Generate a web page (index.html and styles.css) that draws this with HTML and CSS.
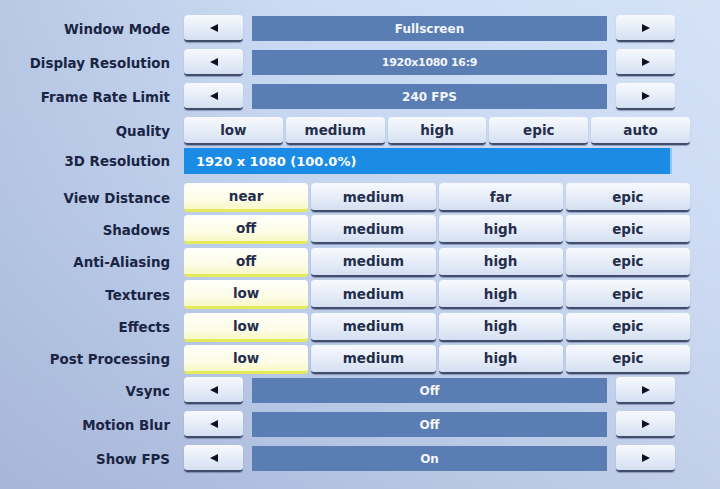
FILE: index.html
```html
<!DOCTYPE html>
<html>
<head>
<meta charset="utf-8">
<link rel="stylesheet" href="styles.css">
</head>
<body>
<div class="panel">
  <div class="row arow">
    <div class="label">Window Mode</div>
    <div class="ctrl arrows">
      <div class="btn arr"><svg width="10" height="10" viewBox="0 0 10 10"><polygon points="1,5 9,1 9,9" /></svg></div>
      <div class="value">Fullscreen</div>
      <div class="btn arr"><svg width="10" height="10" viewBox="0 0 10 10"><polygon points="9,5 1,1 1,9" /></svg></div>
    </div>
  </div>
  <div class="row arow">
    <div class="label">Display Resolution</div>
    <div class="ctrl arrows">
      <div class="btn arr"><svg width="10" height="10" viewBox="0 0 10 10"><polygon points="1,5 9,1 9,9" /></svg></div>
      <div class="value narrow">1920x1080 16:9</div>
      <div class="btn arr"><svg width="10" height="10" viewBox="0 0 10 10"><polygon points="9,5 1,1 1,9" /></svg></div>
    </div>
  </div>
  <div class="row arow">
    <div class="label">Frame Rate Limit</div>
    <div class="ctrl arrows">
      <div class="btn arr"><svg width="10" height="10" viewBox="0 0 10 10"><polygon points="1,5 9,1 9,9" /></svg></div>
      <div class="value">240 FPS</div>
      <div class="btn arr"><svg width="10" height="10" viewBox="0 0 10 10"><polygon points="9,5 1,1 1,9" /></svg></div>
    </div>
  </div>
  <div class="row qrow">
    <div class="label">Quality</div>
    <div class="ctrl five">
      <div class="btn">low</div>
      <div class="btn">medium</div>
      <div class="btn">high</div>
      <div class="btn">epic</div>
      <div class="btn">auto</div>
    </div>
  </div>
  <div class="row rrow">
    <div class="label">3D Resolution</div>
    <div class="ctrl">
      <div class="resbar">1920 x 1080 (100.0%)</div>
    </div>
  </div>
  <div class="row srow">
    <div class="label">View Distance</div>
    <div class="ctrl four">
      <div class="btn sel">near</div>
      <div class="btn">medium</div>
      <div class="btn">far</div>
      <div class="btn">epic</div>
    </div>
  </div>
  <div class="row srow">
    <div class="label">Shadows</div>
    <div class="ctrl four">
      <div class="btn sel">off</div>
      <div class="btn">medium</div>
      <div class="btn">high</div>
      <div class="btn">epic</div>
    </div>
  </div>
  <div class="row srow">
    <div class="label">Anti-Aliasing</div>
    <div class="ctrl four">
      <div class="btn sel">off</div>
      <div class="btn">medium</div>
      <div class="btn">high</div>
      <div class="btn">epic</div>
    </div>
  </div>
  <div class="row srow">
    <div class="label">Textures</div>
    <div class="ctrl four">
      <div class="btn sel">low</div>
      <div class="btn">medium</div>
      <div class="btn">high</div>
      <div class="btn">epic</div>
    </div>
  </div>
  <div class="row srow">
    <div class="label">Effects</div>
    <div class="ctrl four">
      <div class="btn sel">low</div>
      <div class="btn">medium</div>
      <div class="btn">high</div>
      <div class="btn">epic</div>
    </div>
  </div>
  <div class="row srow">
    <div class="label">Post Processing</div>
    <div class="ctrl four">
      <div class="btn sel">low</div>
      <div class="btn">medium</div>
      <div class="btn">high</div>
      <div class="btn">epic</div>
    </div>
  </div>
  <div class="row arow">
    <div class="label">Vsync</div>
    <div class="ctrl arrows">
      <div class="btn arr"><svg width="10" height="10" viewBox="0 0 10 10"><polygon points="1,5 9,1 9,9" /></svg></div>
      <div class="value">Off</div>
      <div class="btn arr"><svg width="10" height="10" viewBox="0 0 10 10"><polygon points="9,5 1,1 1,9" /></svg></div>
    </div>
  </div>
  <div class="row arow">
    <div class="label">Motion Blur</div>
    <div class="ctrl arrows">
      <div class="btn arr"><svg width="10" height="10" viewBox="0 0 10 10"><polygon points="1,5 9,1 9,9" /></svg></div>
      <div class="value">Off</div>
      <div class="btn arr"><svg width="10" height="10" viewBox="0 0 10 10"><polygon points="9,5 1,1 1,9" /></svg></div>
    </div>
  </div>
  <div class="row arow">
    <div class="label">Show FPS</div>
    <div class="ctrl arrows">
      <div class="btn arr"><svg width="10" height="10" viewBox="0 0 10 10"><polygon points="1,5 9,1 9,9" /></svg></div>
      <div class="value">On</div>
      <div class="btn arr"><svg width="10" height="10" viewBox="0 0 10 10"><polygon points="9,5 1,1 1,9" /></svg></div>
    </div>
  </div>
</div>
</body>
</html>
```
FILE: styles.css
```css
html, body {
  margin: 0;
  padding: 0;
  width: 720px;
  height: 489px;
  overflow: hidden;
}
body {
  font-family: "DejaVu Sans", "Open Sans", sans-serif;
  font-weight: 700;
  background:
    linear-gradient(90deg, rgba(150,165,200,0.35) 0%, rgba(160,175,205,0) 40%, rgba(235,243,255,0.3) 100%),
    linear-gradient(180deg, #cbdbf3 0%, #c2d3ef 45%, #b1c0e0 100%);
}
.panel {
  padding-top: 15px;
  display: flex;
  flex-direction: column;
}
.row {
  display: flex;
  align-items: center;
}
.label {
  width: 170px;
  text-align: right;
  font-size: 13.4px;
  color: #1a2443;
  flex-shrink: 0;
  padding-top: 1px;
}
.ctrl {
  margin-left: 14px;
  width: 506px;
  height: 100%;
  display: flex;
}
.arow { height: 27px; margin-bottom: 7px; }
.qrow { height: 28px; margin-bottom: 3px; }
.rrow { height: 26px; margin-bottom: 9px; }
.srow { height: 29px; margin-bottom: 3.4px; }

.btn {
  box-sizing: border-box;
  display: flex;
  align-items: center;
  justify-content: center;
  background: linear-gradient(180deg, #f7f9fd 0%, #e9eff9 45%, #d3dff1 100%);
  border-radius: 4px;
  border-bottom: 2px solid #3f4c6c;
  box-shadow: 0 1px 1px rgba(40,50,80,0.35);
  font-size: 13.5px;
  color: #242e4a;
}
.btn.sel {
  background: linear-gradient(180deg, #fffffb 0%, #fdfde9 60%, #f8f8c8 100%);
  border-bottom: 3px solid #e4ea5a;
  box-shadow: none;
}
.arrows { width: 491px; gap: 9px; }
.arr { width: 59px; flex-shrink: 0; }
.arr svg { display: block; }
.arr polygon { fill: #0d1020; }
.value {
  flex: 1;
  height: 25px;
  margin-top: 1px;
  background: #5a7db3;
  color: #f2f5fb;
  font-size: 12px;
  display: flex;
  align-items: center;
  justify-content: center;
}
.value.narrow {
  font-size: 11px;
  letter-spacing: -0.3px;
}
.five { gap: 3px; }
.five .btn { flex: 1; }
.four { gap: 3px; }
.four .btn { flex: 1; }
.resbar {
  width: 488px;
  height: 26px;
  box-sizing: border-box;
  background: #1b8be6;
  border-right: 2px solid #8fc3f0;
  color: #ffffff;
  font-size: 13px;
  display: flex;
  align-items: center;
  padding-left: 12px;
}
```
